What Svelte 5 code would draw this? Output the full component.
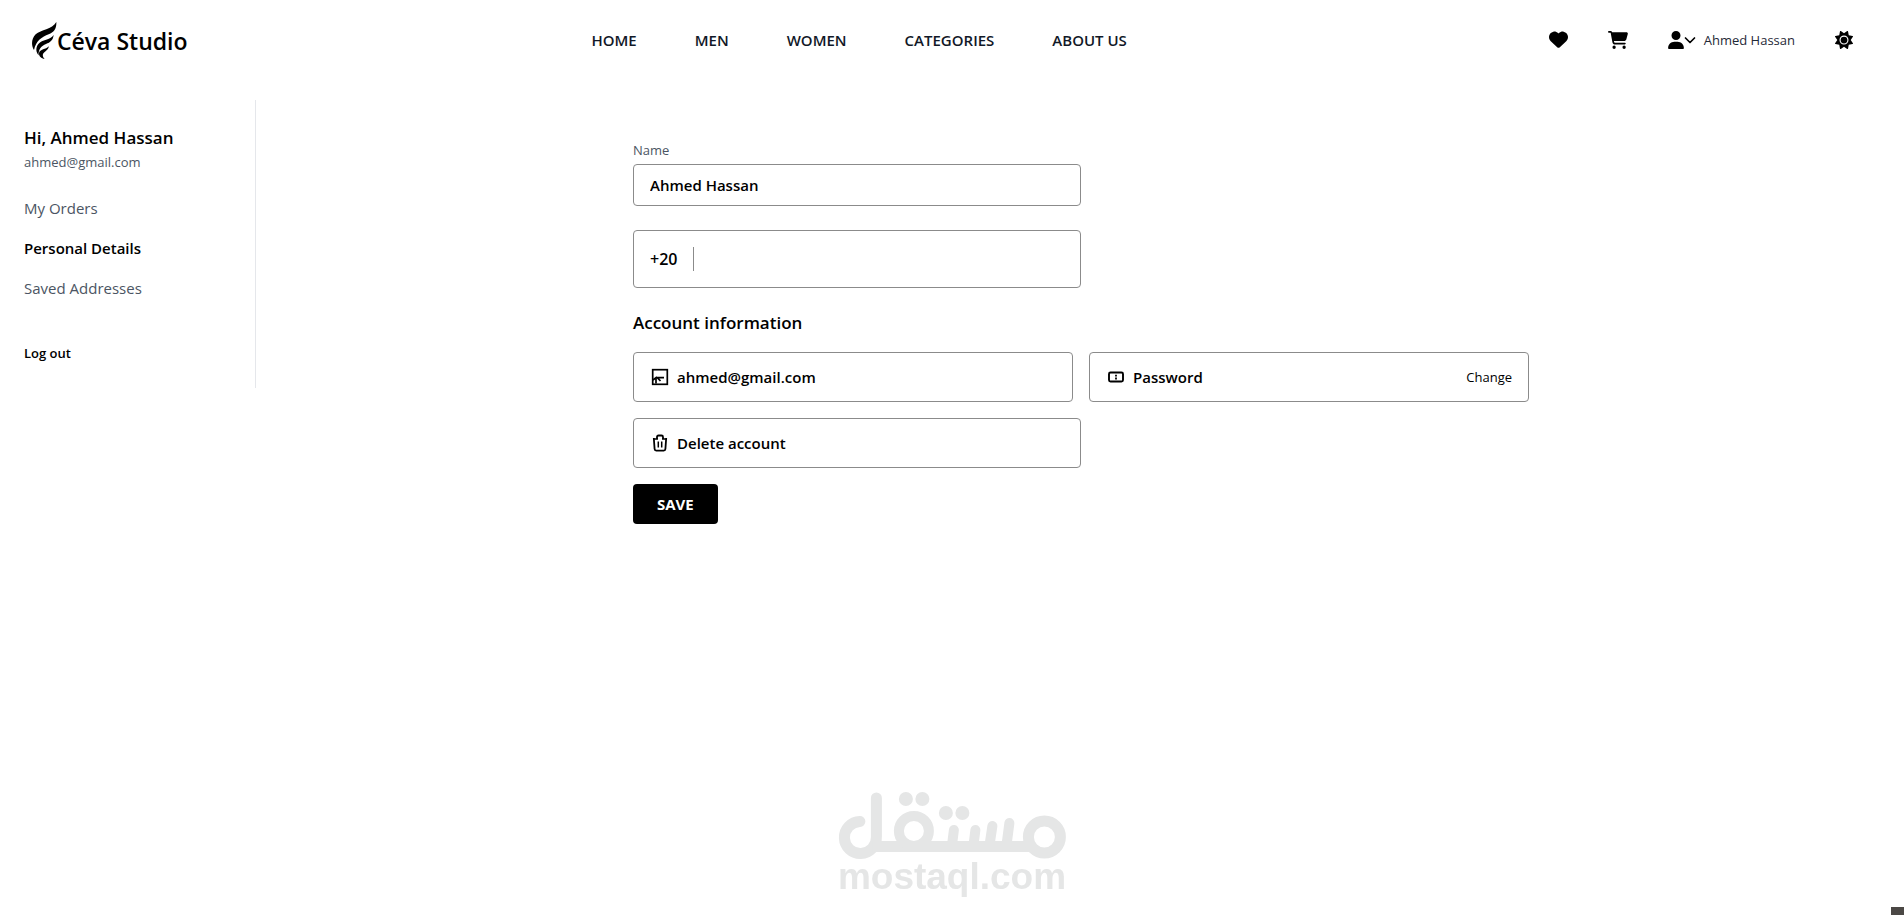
<script>
  let name = $state('Ahmed Hassan');
  let phone = $state('');
  const links = ['HOME', 'MEN', 'WOMEN', 'CATEGORIES', 'ABOUT US'];
  const sections = [
    { label: 'My Orders', active: false },
    { label: 'Personal Details', active: true },
    { label: 'Saved Addresses', active: false }
  ];
</script>

<header>
  <a class="brand" href="#home">
    <svg width="25" height="38" viewBox="0 0 75 114" aria-hidden="true">
      <path d="M73 0C74 20 66 31 50 37C30 45 12 56 6 84C-3 70-2 50 11 37C27 22 60 24 73 0Z" />
      <path d="M65 39C63 55 55 61 42 66C28 72 19 81 20 100C11 90 11 76 19 66C31 52 54 55 65 39Z" />
      <path d="M51 73C48 82 45 85 39 89C31 94 30 103 38 111C28 110 20 102 21 93C24 81 41 83 51 73Z" />
    </svg>
    <span>Céva Studio</span>
  </a>
  <nav>
    {#each links as link}<a href="#{link.toLowerCase().replace(' ', '-')}">{link}</a>{/each}
  </nav>
  <div class="tools">
    <button aria-label="Favourites">
      <svg width="19" height="19" viewBox="0 0 512 512"><path d="M47.600 300.400L228.300 469.100c7.500 7 17.400 10.900 27.700 10.900s20.200-3.900 27.700-10.900L464.400 300.400c30.400-28.300 47.600-68 47.600-109.500v-5.800c0-69.900-50.500-129.500-119.400-141C347 36.500 300.600 51.400 268 84L256 96 244 84c-32.600-32.600-79-47.500-124.600-39.900C50.500 55.600 0 115.200 0 185.100v5.800c0 41.500 17.200 81.200 47.600 109.500z" /></svg>
    </button>
    <button aria-label="Cart">
      <svg width="20" height="18" viewBox="0 0 576 512"><path d="M0 24C0 10.700 10.700 0 24 0H69.500c22 0 41.500 12.800 50.600 32h411c26.300 0 45.500 25 38.600 50.400l-41 152.300c-8.500 31.400-37 53.300-69.500 53.300H170.700l5.400 28.500c2.200 11.300 12.100 19.500 23.600 19.500H488c13.300 0 24 10.700 24 24s-10.700 24-24 24H199.700c-34.600 0-64.300-24.600-70.700-58.500L77.400 54.500c-.7-3.800-4-6.500-7.900-6.500H24C10.700 48 0 37.300 0 24zM128 464a48 48 0 1 1 96 0 48 48 0 1 1 -96 0zm336-48a48 48 0 1 1 0 96 48 48 0 1 1 0-96z" /></svg>
    </button>
    <button class="user">
      <svg width="16" height="18" viewBox="0 0 448 512"><path d="M224 256A128 128 0 1 0 224 0a128 128 0 1 0 0 256zm-45.700 48C79.800 304 0 383.800 0 482.300C0 498.700 13.300 512 29.700 512H418.300c16.400 0 29.700-13.300 29.700-29.700C448 383.800 368.200 304 269.700 304H178.300z" /></svg>
      <svg width="12" height="12" viewBox="0 0 12 12"><path d="M1.500 4L6 8.500L10.500 4" fill="none" stroke="#000" stroke-width="1.700" stroke-linecap="round" stroke-linejoin="round" /></svg>
      <span>Ahmed Hassan</span>
    </button>
    <button aria-label="Toggle theme">
      <svg width="18" height="18" viewBox="0 0 512 512"><path d="M361.500 1.200c5 2.100 8.600 6.600 9.600 11.900L391 121l107.900 19.800c5.300 1 9.800 4.600 11.900 9.600s1.500 10.700-1.600 15.200L446.900 256l62.300 90.300c3.100 4.500 3.700 10.200 1.600 15.200s-6.600 8.600-11.900 9.600L391 391 371.100 498.900c-1 5.300-4.600 9.800-9.600 11.900s-10.700 1.500-15.200-1.600L256 446.900l-90.300 62.300c-4.500 3.100-10.200 3.700-15.200 1.600s-8.600-6.600-9.600-11.900L121 391 13.100 371.100c-5.300-1-9.800-4.600-11.900-9.600s-1.500-10.700 1.600-15.200L65.100 256 2.800 165.700c-3.100-4.500-3.700-10.200-1.600-15.200s6.600-8.600 11.900-9.600L121 121 140.900 13.100c1-5.300 4.600-9.800 9.600-11.900s10.700-1.500 15.200 1.600L256 65.100 346.300 2.800c4.500-3.100 10.200-3.700 15.200-1.600zM160 256a96 96 0 1 1 192 0 96 96 0 1 1 -192 0zm224 0a128 128 0 1 0 -256 0 128 128 0 1 0 256 0z" /></svg>
    </button>
  </div>
</header>

<div class="page">
  <aside>
    <h2>Hi, Ahmed Hassan</h2>
    <p>ahmed@gmail.com</p>
    <ul>
      {#each sections as s}
        <li><a href="#{s.label.toLowerCase().replace(' ', '-')}" class:active={s.active}>{s.label}</a></li>
      {/each}
    </ul>
    <button class="logout">Log out</button>
  </aside>

  <main>
    <form onsubmit={(e) => e.preventDefault()}>
      <label class="caption" for="name">Name</label>
      <input id="name" class="box name half" type="text" bind:value={name} />
      <div class="box phone half">
        <label for="phone">+20</label>
        <input id="phone" type="tel" bind:value={phone} />
      </div>
      <h3>Account information</h3>
      <div class="pair">
        <div class="box row">
          <svg width="18" height="18" viewBox="0 0 18 18" fill="none" stroke="#000" aria-hidden="true">
            <rect x="1.700" y="1.700" width="14.600" height="14.600" stroke-width="1.700" />
            <path d="M2 12L6 8.800M5 9.600H13M5 9.500V15.500M6.500 9.800L9.500 13" stroke-width="1.700" />
          </svg>
          <span>ahmed@gmail.com</span>
        </div>
        <div class="box row">
          <svg width="18" height="18" viewBox="0 0 18 18" fill="none" stroke="#000" aria-hidden="true">
            <rect x="2" y="4.500" width="14" height="9" rx="1.500" stroke-width="1.900" />
            <path d="M9 6.800V8.600M9 9.600V11.400" stroke-width="1.800" />
          </svg>
          <span>Password</span>
          <button class="change">Change</button>
        </div>
      </div>
      <button class="box row half">
        <svg width="18" height="18" viewBox="0 0 18 18" fill="none" stroke="#000" stroke-width="1.800" aria-hidden="true">
          <path d="M6 5V3Q6 1.500 7.500 1.500H10.500Q12 1.500 12 3V5M2.800 4L3.600 15Q3.700 16.600 5.200 16.600H12.800Q14.300 16.600 14.400 15L15.200 4" />
          <path d="M3 5H7M11 5H15M7.300 7.500V13.500M10.700 7.500V13.500" stroke-width="1.500" />
        </svg>
        <span>Delete account</span>
      </button>
      <button class="save">SAVE</button>
    </form>
  </main>
</div>

<div class="watermark">
  <svg width="228" height="68" viewBox="0 0 228 68" fill="none" stroke="#e5e6e6" aria-hidden="true">
    <path d="M22 29.500A16 16 0 1 0 38.500 45V6" stroke-width="11" stroke-linecap="round" />
    <path d="M35 54.500H194" stroke-width="11" />
    <circle cx="76" cy="39" r="15" stroke-width="10" />
    <circle cx="206.500" cy="45" r="16" stroke-width="11" />
    <path d="M116 38L114 54M137.500 38L135.500 54M154.500 34L151.500 54M171.500 31L168.500 54" stroke-width="10" stroke-linecap="round" />
    <g fill="#e5e6e6" stroke="none">
      <circle cx="68" cy="7" r="7" /><circle cx="84.500" cy="7" r="7" />
      <circle cx="108" cy="21" r="7" /><circle cx="124.500" cy="21" r="7" />
    </g>
  </svg>
  <span>mostaql.com</span>
</div>
<div class="corner"></div>

<style>
  :global(body) {
    background: #fff;
    color: #000;
    font-family: "Open Sans", "Noto Sans", sans-serif;
    font-size: 15px;
    line-height: 24px;
  }
  :global(*) { box-sizing: border-box; }
  a { color: inherit; text-decoration: none; }
  button, input { font: inherit; color: inherit; background: none; border: 0; padding: 0; margin: 0; }
  button { cursor: pointer; }
  svg { display: block; flex: none; }
  h2, h3, p, ul { margin: 0; padding: 0; }
  header {
    display: flex;
    justify-content: space-between;
    align-items: center;
    height: 80px;
    padding: 0 51px 0 32px;
  }
  .brand { display: flex; align-items: center; font-size: 23px; font-weight: 600; line-height: 32px; padding-top: 2px; }
  nav { display: flex; gap: 58px; font-weight: 600; color: #111827; }
  .tools { display: flex; align-items: center; gap: 40px; padding: 0 0 1px 18px; }
  .user { display: flex; align-items: center; font-size: 13px; color: #1f2937; }
  .user span { margin-left: 8px; }
  .page { display: flex; align-items: flex-start; gap: 2px; margin-top: 20px; }
  aside { width: 256px; height: 288px; padding: 24px; border-right: 1px solid #e5e7eb; flex: none; }
  h2, h3 { font-size: 17px; font-weight: 600; line-height: 28px; }
  aside p { font-size: 13px; line-height: 20px; color: #4b5563; }
  ul { list-style: none; display: grid; gap: 16px; margin-top: 24px; color: #4b5563; }
  .active { color: #000; font-weight: 600; }
  .logout { font-size: 13px; font-weight: 600; margin-top: 41px; }
  main { flex: 1; padding: 40px 16px; }
  form { max-width: 896px; margin: 0 auto; display: flex; flex-direction: column; align-items: flex-start; }
  .caption { font-size: 13px; line-height: 20px; margin-bottom: 4px; color: #4b5563; }
  .box { border: 1px solid #8b8b8b; border-radius: 4px; font-weight: 600; }
  .half { width: 50%; }
  .name { height: 42px; padding: 0 16px; }
  .phone { height: 58px; margin-top: 24px; padding: 16px; display: flex; align-items: center; font-size: 16px; }
  .phone label { padding-right: 16px; border-right: 1px solid #8b8b8b; }
  .phone input { flex: 1; min-width: 0; padding-left: 16px; outline: none; }
  h3 { margin: 21px 0 15px; }
  .pair { display: grid; grid-template-columns: 1fr 1fr; gap: 16px; width: 100%; margin-bottom: 16px; }
  .row { display: flex; align-items: center; gap: 8px; height: 50px; padding: 0 16px 0 17px; }
  .change { margin-left: auto; font-size: 13px; font-weight: 400; }
  .save { margin-top: 16px; height: 40px; padding: 0 24px; border-radius: 4px; background: #000; color: #fff; font-weight: 700; }
  .watermark {
    position: fixed;
    left: 50%;
    bottom: 21px;
    transform: translateX(-50%);
    display: flex;
    flex-direction: column;
    align-items: center;
    color: #e5e6e6;
    font: 700 37px/34px "Liberation Sans", Arial, sans-serif;
  }
  .corner { position: fixed; right: 0; bottom: 0; width: 13px; height: 8px; background: #4b4845; }
</style>
